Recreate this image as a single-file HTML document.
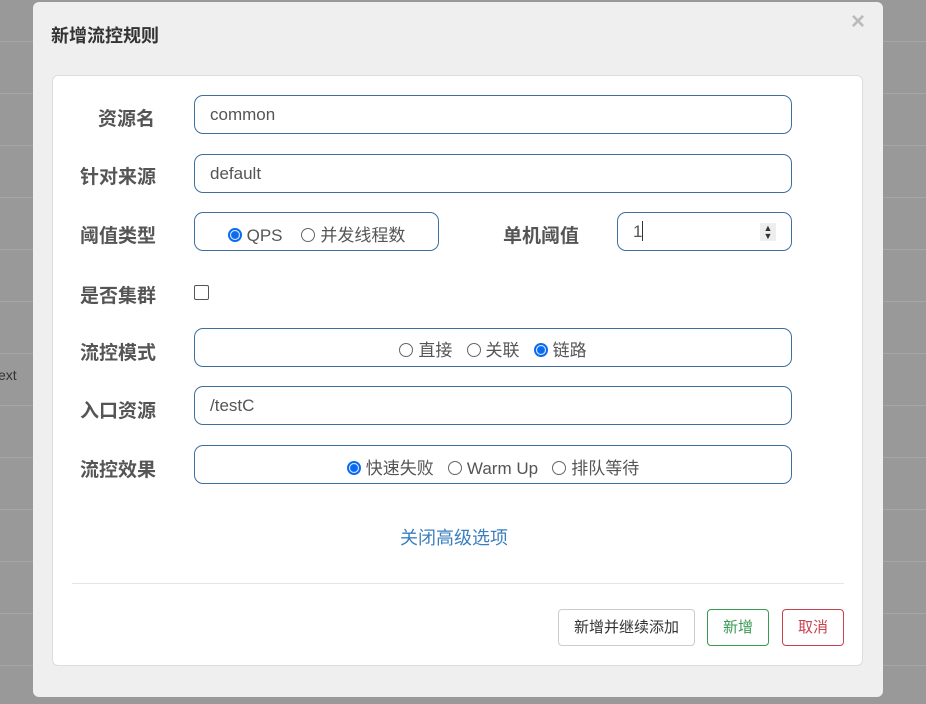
<!DOCTYPE html>
<html><head><meta charset="utf-8"><style>
*{box-sizing:border-box;margin:0;padding:0}
body{width:926px;height:704px;overflow:hidden;background:#999;font-family:"Liberation Sans","Noto Sans CJK SC",sans-serif;position:relative}
.ln{position:absolute;left:0;width:926px;height:1px;background:#a6a6a6}
.dlg{position:absolute;left:33px;top:2px;width:850px;height:695px;background:#efefef;border-radius:6px}
.ttl{position:absolute;left:51px;top:22px;font-size:18px;font-weight:bold;color:#333}
.x{position:absolute;left:851px;top:8px;font-size:24px;color:#bbb;font-weight:bold}
.pn{position:absolute;left:52px;top:75px;width:811px;height:591px;background:#fff;border:1px solid #ddd;border-radius:6px}
.lb{position:absolute;font-size:19px;font-weight:bold;color:#555}
.in{position:absolute;border:1px solid #3f6f9f;border-radius:9px;height:39px;font-size:17px;color:#555;line-height:37px;padding-left:15px;background:#fff}
.r{display:inline-block;width:14px;height:14px;border:1px solid #666;border-radius:50%;vertical-align:-1px;margin-right:5px;background:#fff}
.r.on{border:2px solid #0b6bf0;background:radial-gradient(circle,#0b6bf0 3.5px,#fff 4.5px)}
.ct{text-align:center;padding-left:0}
.btn{position:absolute;top:609px;height:37px;border:1px solid #ccc;border-radius:4px;font-size:15px;line-height:35px;text-align:center;background:#fff;color:#333}
</style></head><body>
<div class="ln" style="top:41px"></div><div class="ln" style="top:93px"></div><div class="ln" style="top:145px"></div><div class="ln" style="top:197px"></div><div class="ln" style="top:249px"></div><div class="ln" style="top:301px"></div><div class="ln" style="top:353px"></div><div class="ln" style="top:405px"></div><div class="ln" style="top:457px"></div><div class="ln" style="top:509px"></div><div class="ln" style="top:561px"></div><div class="ln" style="top:613px"></div><div class="ln" style="top:665px"></div>
<div style="position:absolute;left:-2px;top:367px;font-size:14px;color:#333">ext</div>
<div class="dlg"></div>
<div class="ttl">新增流控规则</div>
<div class="x">×</div>
<div class="pn"></div>
<div class="lb" style="left:98px;top:104px">资源名</div>
<div class="in" style="left:194px;top:95px;width:598px">common</div>
<div class="lb" style="left:80px;top:162px">针对来源</div>
<div class="in" style="left:194px;top:154px;width:598px">default</div>
<div class="lb" style="left:80px;top:221px">阈值类型</div>
<div class="in ct" style="left:194px;top:212px;width:245px;padding-top:4px"><span class="r on"></span>QPS&nbsp;&nbsp;&nbsp; <span class="r"></span>并发线程数</div>
<div class="lb" style="left:503px;top:221px">单机阈值</div>
<div class="in" style="left:617px;top:212px;width:175px">1<span style="display:inline-block;width:1px;height:20px;background:#333;vertical-align:-4px"></span><span style="position:absolute;right:15px;top:10px;width:16px;height:18px;background:#eee;font-size:9px;line-height:8px;text-align:center;color:#333;padding-top:1px">▲<br>▼</span></div>
<div class="lb" style="left:80px;top:281px">是否集群</div>
<div style="position:absolute;left:194px;top:285px;width:15px;height:15px;border:1px solid #555;border-radius:2px;background:#fff"></div>
<div class="lb" style="left:80px;top:338px">流控模式</div>
<div class="in ct" style="left:194px;top:328px;width:598px;padding-top:3px"><span class="r"></span>直接&nbsp;&nbsp; <span class="r"></span>关联&nbsp;&nbsp; <span class="r on"></span>链路</div>
<div class="lb" style="left:80px;top:396px">入口资源</div>
<div class="in" style="left:194px;top:386px;width:598px">/testC</div>
<div class="lb" style="left:80px;top:455px">流控效果</div>
<div class="in ct" style="left:194px;top:445px;width:598px;padding-top:4px"><span class="r on"></span>快速失败&nbsp;&nbsp; <span class="r"></span>Warm Up&nbsp;&nbsp; <span class="r"></span>排队等待</div>
<div style="position:absolute;left:400px;top:524px;font-size:18px;color:#3c7fc0">关闭高级选项</div>
<div style="position:absolute;left:72px;top:583px;width:772px;height:1px;background:#e5e5e5"></div>
<div class="btn" style="left:558px;width:137px">新增并继续添加</div>
<div class="btn" style="left:707px;width:62px;border-color:#3a9a52;color:#3a9a52">新增</div>
<div class="btn" style="left:782px;width:62px;border-color:#c9404f;color:#c9404f">取消</div>
</body></html>
